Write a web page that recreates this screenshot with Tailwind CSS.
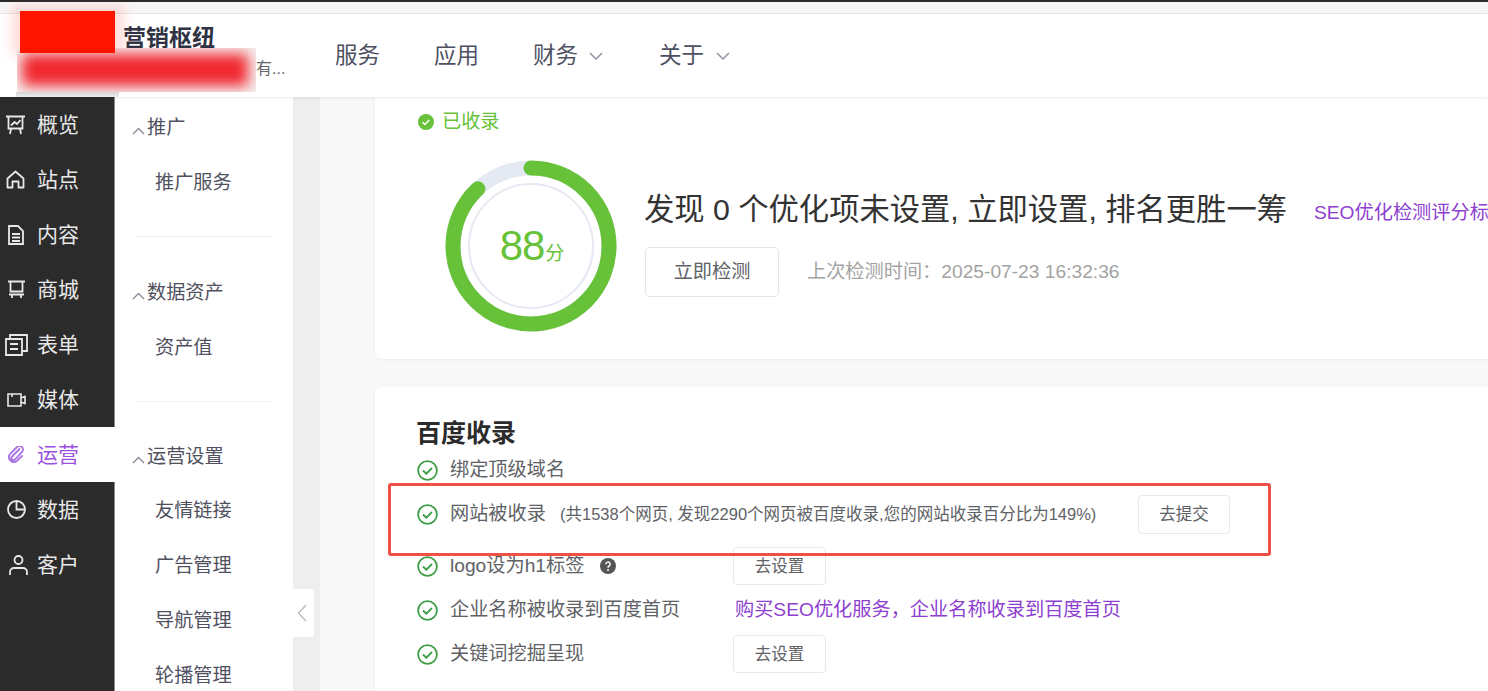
<!DOCTYPE html>
<html lang="zh-CN">
<head>
<meta charset="utf-8">
<title>营销枢纽</title>
<script src="https://cdn.jsdelivr.net/npm/@tailwindcss/browser@4"></script>
</head>
<body class="font-['Liberation_Sans','Noto_Sans_CJK_SC',sans-serif]">
<div class="relative w-[1488px] h-[691px] overflow-hidden bg-white flex flex-col">
  <div class="h-[2px] bg-[#2b2b2b] shrink-0"></div>
  <div class="h-[12px] bg-[#f6f6f6] border-b border-[#e8e8e8] shrink-0"></div>
  <header class="h-[83px] shrink-0 bg-white flex items-center relative z-10 shadow-[0_1px_3px_rgba(0,0,0,0.08)]">
    <div class="w-[335px] shrink-0 h-full relative">
      <div class="pl-[123px] pt-[9px] text-[23px] leading-[30px] font-bold text-[#2f3242]">营销枢纽</div>
      <div class="pl-[256px] pt-[6px] text-[16px] leading-[20px] text-[#666]">有...</div>
    </div>
    <nav class="flex items-center text-[22.500px] leading-[30px] text-[#4e5062]">
      <a class="w-[99px]">服务</a>
      <a class="w-[99px]">应用</a>
      <a class="w-[126px] flex items-center gap-[11px]">财务
        <svg class="w-[14px] h-[8px]" viewBox="0 0 14 8" fill="none" stroke="#8f93a3" stroke-width="1.5"><path d="M1 1l6 6 6-6"/></svg>
      </a>
      <a class="flex items-center gap-[12px]">关于
        <svg class="w-[14px] h-[8px]" viewBox="0 0 14 8" fill="none" stroke="#8f93a3" stroke-width="1.5"><path d="M1 1l6 6 6-6"/></svg>
      </a>
    </nav>
  </header>

  <div class="flex flex-1 min-h-0">
    <aside class="w-[115px] shrink-0 bg-[#2b2b2b] border-r border-[#8a8a8a] text-[21px] text-[#e8e8e8]">
      <div class="h-[55px] flex items-center pl-[6px] gap-[12px]">
        <svg class="w-[19px] h-[20px]" viewBox="0 0 19 20" fill="none" stroke="currentColor" stroke-width="1.800"><path d="M0 1.500h19M2.500 1.500v12h14v-12M5 10.500l3.500-3.500 2.500 2 3.500-4M5 13.500l-1 5.500M14 13.500l1 5.500"/></svg>
        <span>概览</span>
      </div>
      <div class="h-[55px] flex items-center pl-[6px] gap-[12px]">
        <svg class="w-[19px] h-[19px]" viewBox="0 0 19 19" fill="none" stroke="currentColor" stroke-width="1.800" stroke-linejoin="round"><path d="M1.500 8.500l8-7 8 7v9h-5v-6h-6v6h-5z"/></svg>
        <span>站点</span>
      </div>
      <div class="h-[55px] flex items-center pl-[8px] gap-[13px]">
        <svg class="w-[16px] h-[20px]" viewBox="0 0 16 20" fill="none" stroke="currentColor" stroke-width="1.800"><path d="M1 1h9l5 5v13H1zM4 9h8M4 12.500h8M4 16h8"/></svg>
        <span>内容</span>
      </div>
      <div class="h-[55px] flex items-center pl-[8px] gap-[12px]">
        <svg class="w-[17px] h-[19px]" viewBox="0 0 17 19" fill="none" stroke="currentColor" stroke-width="1.800"><path d="M0 1.500h17M2.500 1.500v10h12v-10M1 14.500h15M4 14.500v3.500M13 14.500v3.500"/></svg>
        <span>商城</span>
      </div>
      <div class="h-[55px] flex items-center pl-[5px] gap-[9px]">
        <svg class="w-[23px] h-[22px]" viewBox="0 0 23 22" fill="none" stroke="currentColor" stroke-width="1.800"><path d="M1 5h16v16H1zM5 5V1h17v16h-5M5 10h8M5 15h8"/></svg>
        <span>表单</span>
      </div>
      <div class="h-[55px] flex items-center pl-[7px] gap-[11px]">
        <svg class="w-[19px] h-[14px]" viewBox="0 0 19 14" fill="none" stroke="currentColor" stroke-width="1.600"><path d="M1 1h13v12H1zM5 1v3M14 5l4-1.500v7L14 9"/></svg>
        <span>媒体</span>
      </div>
      <div class="h-[55px] flex items-center pl-[8px] gap-[12px] bg-white text-[#9b51e0] -mr-[1px]">
        <svg class="w-[17px] h-[17px] text-[#ab74e6]" viewBox="0 0 17 17" fill="none" stroke="currentColor" stroke-width="1.800" stroke-linecap="round"><path d="M11.500 3L4 10.500a2 2 0 0 0 3 3l7-7.500a3.500 3.500 0 0 0-5-5L2 8a5 5 0 0 0 7 7l5-5"/></svg>
        <span>运营</span>
      </div>
      <div class="h-[55px] flex items-center pl-[7px] gap-[11px]">
        <svg class="w-[19px] h-[19px]" viewBox="0 0 19 19" fill="none" stroke="currentColor" stroke-width="1.800"><circle cx="9.500" cy="9.500" r="8.500"/><path d="M9.500 1v8.500H18"/></svg>
        <span>数据</span>
      </div>
      <div class="h-[55px] flex items-center pl-[9px] gap-[9px]">
        <svg class="w-[19px] h-[20px]" viewBox="0 0 19 20" fill="none" stroke="currentColor" stroke-width="1.800"><circle cx="9.500" cy="5" r="4"/><path d="M1 20v-3a4 4 0 0 1 4-4h9a4 4 0 0 1 4 4v3"/></svg>
        <span>客户</span>
      </div>
    </aside>

    <div class="w-[178px] shrink-0 bg-white text-[19.200px] text-[#4f5160] pt-[4px]">
      <div class="h-[55px] flex items-center pl-[17px] gap-[2px]">
        <svg class="w-[13px] h-[8px] mt-[4px]" viewBox="0 0 13 8" fill="none" stroke="#8a8d99" stroke-width="1.400"><path d="M1 7l5.500-5.500L12 7"/></svg><span>推广</span>
      </div>
      <div class="h-[55px] flex items-center pl-[40px]">推广服务</div>
      <div class="h-[26px] flex items-end pl-[21px] pr-[20px]"><div class="w-full h-px bg-[#eef0f6]"></div></div>
      <div class="h-[55px] mt-[29px] flex items-center pl-[17px] gap-[2px]">
        <svg class="w-[13px] h-[8px] mt-[4px]" viewBox="0 0 13 8" fill="none" stroke="#8a8d99" stroke-width="1.400"><path d="M1 7l5.500-5.500L12 7"/></svg><span>数据资产</span>
      </div>
      <div class="h-[54px] flex items-center pl-[40px]">资产值</div>
      <div class="h-[27px] flex items-end pl-[21px] pr-[20px]"><div class="w-full h-px bg-[#eef0f6]"></div></div>
      <div class="h-[53px] mt-[29px] flex items-center pl-[17px] gap-[2px]">
        <svg class="w-[13px] h-[8px] mt-[4px]" viewBox="0 0 13 8" fill="none" stroke="#8a8d99" stroke-width="1.400"><path d="M1 7l5.500-5.500L12 7"/></svg><span>运营设置</span>
      </div>
      <div class="h-[55px] flex items-center pl-[40px]">友情链接</div>
      <div class="h-[55px] flex items-center pl-[40px]">广告管理</div>
      <div class="h-[55px] flex items-center pl-[40px]">导航管理</div>
      <div class="h-[55px] flex items-center pl-[40px]">轮播管理</div>
    </div>

    <div class="w-[27px] shrink-0 bg-[#eeeeee]"></div>

    <main class="flex-1 min-w-0 bg-[#f8f8f8] pl-[55px] overflow-hidden">
      <section class="w-[1200px] h-[262px] bg-white rounded-b-md shadow-[0_1px_3px_rgba(0,0,0,0.05)] pt-[13px] pl-[43px]">
        <div class="flex items-center gap-[8px] h-[24px] text-[19.200px] text-[#67c23a]">
          <svg class="w-[16px] h-[16px]" viewBox="0 0 16 16"><circle cx="8" cy="8" r="8" fill="#67c23a"/><path d="M4.500 8.200l2.400 2.300 4.300-4.500" fill="none" stroke="#fff" stroke-width="1.500"/></svg>
          <span>已收录</span>
        </div>
        <div class="flex items-start mt-[26px]">
          <div class="relative w-[172px] h-[172px] ml-[27px] shrink-0">
            <svg class="w-[172px] h-[172px]" viewBox="0 0 172 172" fill="none">
              <circle cx="86" cy="86" r="62" stroke="#e5e9f2" stroke-width="2"/>
              <circle cx="86" cy="86" r="78" stroke="#e5e9f2" stroke-width="15"/>
              <circle cx="86" cy="86" r="78" stroke="#67c23a" stroke-width="15" stroke-linecap="round" stroke-dasharray="431 490" transform="rotate(-90 86 86)"/>
            </svg>
            <div class="absolute inset-0 flex items-center justify-center text-[#67c23a] pl-[2px]">
              <span class="text-[42px] leading-none tracking-[-1px]">88</span><span class="text-[19px] leading-none mt-[14px] ml-[1px]">分</span>
            </div>
          </div>
          <div class="ml-[27px] pt-[26px] min-w-0">
            <div class="flex items-center h-[48px] whitespace-nowrap">
              <span class="text-[30.300px] text-[#333]">发现 0 个优化项未设置, 立即设置, 排名更胜一筹</span>
              <span class="ml-[27px] mt-[6px] text-[19.200px] text-[#8e3fd0]">SEO优化检测评分标准</span>
            </div>
            <div class="flex items-center mt-[13px] ml-[1px]">
              <button class="w-[134px] h-[50px] border border-[#e2e4ee] rounded text-[19.200px] text-[#606266] bg-white">立即检测</button>
              <span class="ml-[28px] text-[19.200px] text-[#a3a3a3] whitespace-nowrap">上次检测时间：2025-07-23 16:32:36</span>
            </div>
          </div>
        </div>
      </section>

      <section class="w-[1200px] h-[400px] bg-white rounded-md shadow-[0_1px_3px_rgba(0,0,0,0.05)] mt-[28px] pt-[30px] pl-[42px]">
        <h2 class="text-[25px] leading-[32px] font-bold text-[#2b2b2b] -ml-[1px]">百度收录</h2>
        <div class="h-[42px] flex items-center text-[19.200px] text-[#606266] pt-[1px]">
          <svg class="w-[21px] h-[21px] mr-[12px]" viewBox="0 0 21 21" fill="none" stroke="#3d9e46" stroke-width="1.800"><circle cx="10.500" cy="10.500" r="9.400"/><path d="M6 10.500l3.300 3.200 5.700-5.700"/></svg>
          <span>绑定顶级域名</span>
        </div>
        <div class="h-[46px] flex items-center text-[#606266]">
          <svg class="w-[21px] h-[21px] mr-[12px]" viewBox="0 0 21 21" fill="none" stroke="#3d9e46" stroke-width="1.800"><circle cx="10.500" cy="10.500" r="9.400"/><path d="M6 10.500l3.300 3.200 5.700-5.700"/></svg>
          <span class="text-[19.200px] w-[110px]">网站被收录</span>
          <span class="text-[16.500px] w-[578px] whitespace-nowrap">(共1538个网页, 发现2290个网页被百度收录,您的网站收录百分比为149%)</span>
          <button class="w-[92px] h-[39px] border border-[#e6e7ef] rounded text-[16.500px] text-[#606266] bg-white">去提交</button>
        </div>
        <div class="flex items-center text-[#606266] mt-[10px] mb-[10px] h-[38px]">
          <svg class="w-[21px] h-[21px] mr-[12px]" viewBox="0 0 21 21" fill="none" stroke="#3d9e46" stroke-width="1.800"><circle cx="10.500" cy="10.500" r="9.400"/><path d="M6 10.500l3.300 3.200 5.700-5.700"/></svg>
          <span class="text-[19.200px] w-[150px]">logo设为h1标签</span>
          <svg class="w-[16px] h-[16px] mr-[117px]" viewBox="0 0 16 16"><circle cx="8" cy="8" r="8" fill="#555"/><path d="M5.800 6.200a2.200 2.100 0 1 1 3.300 1.800c-.8.500-1.100.9-1.100 1.700" fill="none" stroke="#fff" stroke-width="1.500"/><circle cx="8" cy="12" r="1" fill="#fff"/></svg>
          <button class="w-[93px] h-[38px] border border-[#e6e7ef] rounded text-[16.500px] text-[#606266] bg-white">去设置</button>
        </div>
        <div class="h-[30px] flex items-center text-[#606266]">
          <svg class="w-[21px] h-[21px] mr-[12px]" viewBox="0 0 21 21" fill="none" stroke="#3d9e46" stroke-width="1.800"><circle cx="10.500" cy="10.500" r="9.400"/><path d="M6 10.500l3.300 3.200 5.700-5.700"/></svg>
          <span class="text-[19.200px] w-[285px]">企业名称被收录到百度首页</span>
          <span class="text-[19.200px] text-[#8e3fd0]">购买SEO优化服务，企业名称收录到百度首页</span>
        </div>
        <div class="flex items-center text-[#606266] mt-[10px] mb-[10px] h-[38px]">
          <svg class="w-[21px] h-[21px] mr-[12px]" viewBox="0 0 21 21" fill="none" stroke="#3d9e46" stroke-width="1.800"><circle cx="10.500" cy="10.500" r="9.400"/><path d="M6 10.500l3.300 3.200 5.700-5.700"/></svg>
          <span class="text-[19.200px] w-[283px]">关键词挖掘呈现</span>
          <button class="w-[93px] h-[38px] border border-[#e6e7ef] rounded text-[16.500px] text-[#606266] bg-white">去设置</button>
        </div>
      </section>
    </main>
  </div>

  <!-- collapse tab over the gutter -->
  <div class="absolute z-20 left-[293px] top-[589px] w-[21px] h-[48px] bg-white rounded-r flex items-center justify-center">
    <svg class="w-[10px] h-[18px] -ml-[3px]" viewBox="0 0 10 18" fill="none" stroke="#bdbdbd" stroke-width="1.500"><path d="M9 1L1.500 9 9 17"/></svg>
  </div>
  <!-- redaction marks -->
  <div class="absolute z-20 left-[12px] top-[6px] w-[112px] h-[50px] bg-[#ff1400]/15 blur-[6px]"></div>
  <div class="absolute z-30 left-[17px] top-[48px] w-[239px] h-[44px] bg-[#f6f0f0] overflow-hidden">
    <div class="absolute left-[5px] top-[6px] w-[226px] h-[32px] bg-[#f0262e] blur-[7px]"></div>
  </div>
  <div class="absolute z-20 left-[16px] top-[92px] w-[103px] h-[5px] bg-gradient-to-b from-[#d8d4d4] to-[#ececec]"></div>
  <div class="absolute z-30 left-[20px] top-[11px] w-[95px] h-[42px] bg-[#ff1400]"></div>
  <!-- annotation box -->
  <div class="absolute z-30 left-[388px] top-[483px] w-[883px] h-[73px] border-[3px] border-[#ee5046] rounded-[3px]"></div>
</div>
</body>
</html>
